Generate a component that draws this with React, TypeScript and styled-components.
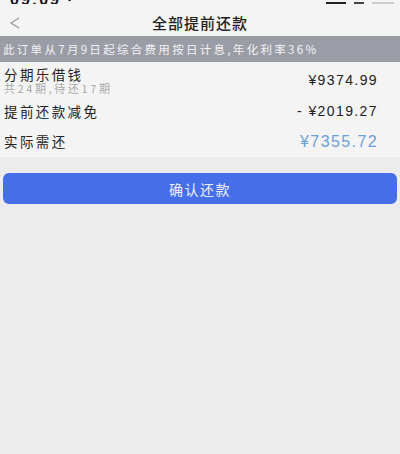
import * as React from "react";
import styled, { createGlobalStyle } from "styled-components";

const GlobalStyle = createGlobalStyle`
  html, body {
    margin: 0;
    padding: 0;
    background: #ececec;
    font-family: "Noto Sans CJK SC", "Liberation Sans", sans-serif;
  }
`;

const SPage = styled.div`
  width: 400px;
  min-height: 454px;
  background: #ececec;
`;

const SStatusBar = styled.div`
  height: 4px;
  overflow: hidden;
  background: #f4f4f4;
  display: flex;
  justify-content: space-between;
  align-items: flex-end;
  padding: 0 6px 0 10px;
`;

const SStatusText = styled.span`
  font-family: "Liberation Sans", sans-serif;
  font-weight: bold;
  font-size: 16px;
  line-height: 9px;
  height: 9px;
  color: #111;
  letter-spacing: 2px;
`;

const SStatusIcons = styled.div`
  display: flex;
  align-items: flex-end;
  gap: 8px;
  height: 4px;
`;

const SBar = styled.div<{ $w: number; $c: string }>`
  width: ${(p) => p.$w}px;
  height: 2px;
  background: ${(p) => p.$c};
`;

const SNav = styled.header`
  height: 32px;
  background: #f4f4f4;
  display: flex;
  align-items: center;
  position: relative;
`;

const SBack = styled.svg`
  position: absolute;
  left: 9px;
  top: 13px;
`;

const STitle = styled.h1`
  margin: 0 auto;
  padding-top: 4px;
  font-size: 15px;
  font-weight: 500;
  color: #222;
  letter-spacing: 1px;
`;

const SBanner = styled.div`
  height: 26px;
  background: #9b9da6;
  color: #f2f2f4;
  font-size: 11.5px;
  letter-spacing: 2.3px;
  display: flex;
  align-items: center;
  padding-left: 3px;
  white-space: nowrap;
`;

const SList = styled.div`
  background: #f4f4f4;
  padding-top: 2px;
`;

const SRow = styled.div<{ $h: number }>`
  height: ${(p) => p.$h}px;
  display: flex;
  align-items: center;
  justify-content: space-between;
  padding: 0 22px 0 4px;
`;

const SLabelBox = styled.div`
  display: flex;
  flex-direction: column;
  gap: 1px;
`;

const SLabel = styled.span`
  font-size: 13.5px;
  letter-spacing: 2.4px;
  color: #222;
  line-height: 15px;
`;

const SSub = styled.span`
  font-size: 11px;
  letter-spacing: 2.6px;
  color: #a9a9a9;
  line-height: 11px;
`;

const SAmount = styled.span<{ $accent?: boolean }>`
  font-family: "Liberation Sans", sans-serif;
  font-size: ${(p) => (p.$accent ? "16px" : "14px")};
  letter-spacing: 1.4px;
  color: ${(p) => (p.$accent ? "#6aa0dc" : "#222")};
`;

const SButtonWrap = styled.div`
  padding: 16px 3px 0;
`;

const SButton = styled.button`
  width: 100%;
  height: 31px;
  border: none;
  border-radius: 6px;
  background: #466ee8;
  color: #eef2ff;
  font-family: "Noto Sans CJK SC", sans-serif;
  font-size: 14px;
  letter-spacing: 1.5px;
`;

const App = () => (
  <SPage>
    <GlobalStyle />
    <SStatusBar>
      <SStatusText>09:09 ·</SStatusText>
      <SStatusIcons>
        <SBar $w={20} $c="#222" />
        <SBar $w={10} $c="#444" />
        <SBar $w={22} $c="#ccc" />
      </SStatusIcons>
    </SStatusBar>
    <SNav>
      <SBack width="12" height="12" viewBox="0 0 12 12">
        <polyline points="10,1 2,6 10,11" fill="none" stroke="#9a9a9a" strokeWidth="1.3" />
      </SBack>
      <STitle>全部提前还款</STitle>
    </SNav>
    <SBanner>此订单从7月9日起综合费用按日计息,年化利率36%</SBanner>
    <SList>
      <SRow $h={32}>
        <SLabelBox>
          <SLabel>分期乐借钱</SLabel>
          <SSub>共24期,待还17期</SSub>
        </SLabelBox>
        <SAmount>¥9374.99</SAmount>
      </SRow>
      <SRow $h={30}>
        <SLabel>提前还款减免</SLabel>
        <SAmount>- ¥2019.27</SAmount>
      </SRow>
      <SRow $h={31}>
        <SLabel>实际需还</SLabel>
        <SAmount $accent>¥7355.72</SAmount>
      </SRow>
    </SList>
    <SButtonWrap>
      <SButton>确认还款</SButton>
    </SButtonWrap>
  </SPage>
);

export default App;
